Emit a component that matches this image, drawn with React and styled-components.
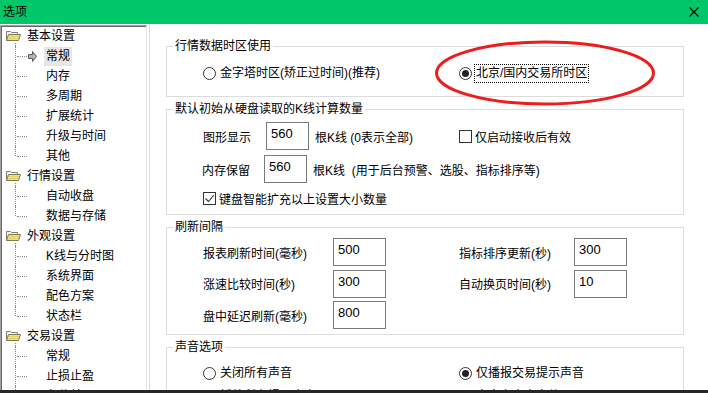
import React from "react";
import styled, { createGlobalStyle } from "styled-components";

const GlobalStyle = createGlobalStyle`
  html, body {
    margin: 0;
    padding: 0;
    background: #fff;
  }
  body {
    font-family: "Liberation Sans", "Noto Sans CJK SC", sans-serif;
    font-size: 12px;
    color: #000;
  }
`;

const tree = [
  {
    label: "基本设置",
    children: ["常规", "内存", "多周期", "扩展统计", "升级与时间", "其他"],
    selected: 0,
  },
  { label: "行情设置", children: ["自动收盘", "数据与存储"] },
  { label: "外观设置", children: ["K线与分时图", "系统界面", "配色方案", "状态栏"] },
  { label: "交易设置", children: ["常规", "止损止盈", "条件单"] },
];

const FolderIcon = () => (
  <svg width="15" height="12" viewBox="0 0 15 12">
    <path d="M0.5 10.5V1.5h4l1 1h6v2" fill="#f4f4f4" stroke="#7c7c7c" />
    <path
      d="M2.5 4.5h12l-2 6h-12z"
      fill="#efe27a"
      stroke="#7d7a55"
      strokeLinejoin="round"
    />
    <path d="M3.5 6.5h9M2.8 8.5h9" stroke="#d8c650" strokeDasharray="1 1" />
  </svg>
);

const ArrowIcon = () => (
  <svg width="9" height="11" viewBox="0 0 9 11">
    <path
      d="M0.5 3.5h4v-3l4 5-4 5v-3h-4z"
      fill="#b4b4b4"
      stroke="#5a5a5a"
      strokeLinejoin="round"
    />
  </svg>
);

const CloseIcon = () => (
  <svg width="10" height="10" viewBox="0 0 10 10">
    <path d="M0.5 0.5l9 9M9.5 0.5l-9 9" stroke="#000" strokeWidth="1.1" />
  </svg>
);

const Check = () => (
  <svg width="11" height="11" viewBox="0 0 11 11">
    <path d="M1.5 5.5l3 3 5.5-6.5" fill="none" stroke="#333" strokeWidth="1.1" />
  </svg>
);

const Option = ({ checked, focused, children }) => (
  <OptionRow>
    <Radio $checked={checked} />
    <OptionText $focused={focused}>{children}</OptionText>
  </OptionRow>
);

const App = () => {
  return (
    <Window>
      <GlobalStyle />
      <TitleBar>
        <span>选项</span>
        <CloseIcon />
      </TitleBar>
      <Body>
        <Tree>
          {tree.map((group) => (
            <div key={group.label}>
              <RootRow $open>
                <FolderIcon />
                <RootText>{group.label}</RootText>
              </RootRow>
              {group.children.map((child, i) => (
                <ChildRow key={child + i} $last={i === group.children.length - 1}>
                  <ArrowSlot>{group.selected === i && <ArrowIcon />}</ArrowSlot>
                  <ChildText $selected={group.selected === i}>{child}</ChildText>
                </ChildRow>
              ))}
            </div>
          ))}
        </Tree>
        <Panel>
          <Group>
            <Legend>行情数据时区使用</Legend>
            <TwoCols $pad="9px 0 13px 36px">
              <Option>金字塔时区(矫正过时间)(推荐)</Option>
              <Option checked focused>
                北京/国内交易所时区
              </Option>
            </TwoCols>
          </Group>

          <Group>
            <Legend>默认初始从硬盘读取的K线计算数量</Legend>
            <Stack>
              <TwoCols>
                <FieldRow>
                  <FieldLabel $w={63}>图形显示</FieldLabel>
                  <TextBox $w={43} readOnly defaultValue="560" />
                  <Suffix>根K线 (0表示全部)</Suffix>
                </FieldRow>
                <CheckRow>
                  <Box />
                  <span>仅启动接收后有效</span>
                </CheckRow>
              </TwoCols>
              <FieldRow>
                <FieldLabel $w={62} $shift={-1}>
                  内存保留
                </FieldLabel>
                <TextBox $w={43} readOnly defaultValue="560" />
                <Suffix>根K线&nbsp; (用于后台预警、选股、指标排序等)</Suffix>
              </FieldRow>
              <CheckRow>
                <Box>
                  <Check />
                </Box>
                <span>键盘智能扩充以上设置大小数量</span>
              </CheckRow>
            </Stack>
          </Group>

          <Group>
            <Legend>刷新间隔</Legend>
            <RefreshGrid>
              <span>报表刷新时间(毫秒)</span>
              <TextBox $w={53} readOnly defaultValue="500" />
              <span />
              <span>指标排序更新(秒)</span>
              <TextBox $w={53} readOnly defaultValue="300" />
              <span>涨速比较时间(秒)</span>
              <TextBox $w={53} readOnly defaultValue="300" />
              <span />
              <span>自动换页时间(秒)</span>
              <TextBox $w={53} readOnly defaultValue="10" />
              <span>盘中延迟刷新(毫秒)</span>
              <TextBox $w={53} readOnly defaultValue="800" />
            </RefreshGrid>
          </Group>

          <Group>
            <Legend>声音选项</Legend>
            <TwoCols $pad="8px 0 0 36px" $gap="3px">
              <Option>关闭所有声音</Option>
              <Option checked>仅播报交易提示声音</Option>
              <Option>播放所有提示声音</Option>
              <Option>自定义声音文件(wav)</Option>
            </TwoCols>
          </Group>

          <Ellipse width="222" height="66" viewBox="0 0 222 66">
            <ellipse
              cx="111"
              cy="33"
              rx="108.5"
              ry="31"
              fill="none"
              stroke="#ee1c1c"
              strokeWidth="3"
            />
          </Ellipse>
        </Panel>
      </Body>
      <Footer />
    </Window>
  );
};

export default App;

const Window = styled.div`
  width: 708px;
  height: 393px;
  display: flex;
  flex-direction: column;
  overflow: hidden;
  background: #fff;
`;

const TitleBar = styled.div`
  height: 24px;
  flex: none;
  box-sizing: border-box;
  padding: 0 9px 0 3px;
  display: flex;
  align-items: center;
  justify-content: space-between;
  background: #00c86a;
  line-height: 16px;
`;

const Body = styled.div`
  flex: 1;
  min-height: 0;
  display: flex;
  overflow: hidden;
`;

const Footer = styled.div`
  height: 3px;
  flex: none;
  background: #262626;
`;

const Tree = styled.div`
  width: 147px;
  flex: none;
  box-sizing: border-box;
  margin-top: 1px;
  border-top: 1px solid #a0a0a0;
  border-left: 1px solid #a0a0a0;
  border-right: 1px solid #e3e3e3;
  box-shadow: inset 1px 1px 0 #696969;
  overflow: hidden;
`;

const RootRow = styled.div`
  position: relative;
  height: 20px;
  display: flex;
  align-items: center;
  padding-left: 5px;

  &::after {
    content: "";
    display: ${(p) => (p.$open ? "block" : "none")};
    position: absolute;
    left: 14px;
    top: 17px;
    bottom: 0;
    border-left: 1px dotted #8a8a8a;
  }
`;

const RootText = styled.span`
  margin-left: 6px;
  line-height: 18px;
`;

const ChildRow = styled.div`
  position: relative;
  height: 20px;
  display: flex;
  align-items: center;
  padding-left: 26px;

  &::before {
    content: "";
    position: absolute;
    left: 14px;
    top: 0;
    height: ${(p) => (p.$last ? "10px" : "20px")};
    border-left: 1px dotted #8a8a8a;
  }

  &::after {
    content: "";
    position: absolute;
    left: 16px;
    top: 10px;
    width: 10px;
    border-top: 1px dotted #8a8a8a;
  }
`;

const ArrowSlot = styled.span`
  width: 17px;
  height: 11px;
  display: flex;
  padding-left: 1px;
  box-sizing: border-box;
`;

const ChildText = styled.span`
  padding: 0 2px;
  height: 19px;
  line-height: 19px;
  background: ${(p) => (p.$selected ? "#e6e6e6" : "transparent")};
`;

const Panel = styled.div`
  flex: 1;
  position: relative;
  margin-left: 2px;
  border-left: 1px solid #dcdcdc;
  padding: 14px 24px 0 16px;
  display: flex;
  flex-direction: column;
  gap: 4px;
`;

const Group = styled.fieldset`
  margin: 0;
  padding: 0;
  min-width: 0;
  border: 1px solid #dcdcdc;
`;

const Legend = styled.legend`
  margin-left: 6px;
  padding: 0 2px;
  line-height: 16px;
`;

const TwoCols = styled.div`
  display: grid;
  grid-template-columns: 256px auto;
  align-items: center;
  row-gap: ${(p) => p.$gap || "0"};
  padding: ${(p) => p.$pad || "0"};
`;

const Stack = styled.div`
  display: flex;
  flex-direction: column;
  gap: 5px;
  padding: 5px 0 6px 36px;
`;

const OptionRow = styled.div`
  height: 20px;
  display: flex;
  align-items: center;
`;

const Radio = styled.span`
  width: 13px;
  height: 13px;
  flex: none;
  box-sizing: border-box;
  border: 1px solid #333;
  border-radius: 50%;
  display: flex;
  align-items: center;
  justify-content: center;
  margin-right: 2px;

  &::after {
    content: "";
    display: ${(p) => (p.$checked ? "block" : "none")};
    width: 7px;
    height: 7px;
    border-radius: 50%;
    background: #222;
  }
`;

const OptionText = styled.span`
  line-height: 17px;
  padding: 0 1px;
  border: 1px dotted ${(p) => (p.$focused ? "#000" : "transparent")};
`;

const FieldRow = styled.div`
  height: 28px;
  display: flex;
  align-items: center;
`;

const FieldLabel = styled.span`
  width: ${(p) => p.$w}px;
  margin-left: ${(p) => p.$shift || 0}px;
  flex: none;
`;

const TextBox = styled.input`
  width: ${(p) => p.$w}px;
  height: 28px;
  box-sizing: border-box;
  margin: 0;
  padding: 1px 4px 6px;
  border: 1px solid #7a7a7a;
  border-radius: 0;
  outline: none;
  background: #fff;
  font-family: "Liberation Sans", sans-serif;
  font-size: 13px;
  color: #000;
`;

const Suffix = styled.span`
  margin-left: 6px;
  white-space: nowrap;
`;

const CheckRow = styled.div`
  height: 20px;
  display: flex;
  align-items: center;
  gap: 3px;
`;

const Box = styled.span`
  width: 13px;
  height: 13px;
  box-sizing: border-box;
  border: 1px solid #333;
  display: flex;
  align-items: center;
  justify-content: center;
`;

const RefreshGrid = styled.div`
  display: grid;
  grid-template-columns: 130px 53px 73px 115px 53px;
  grid-auto-rows: 28px;
  row-gap: 3.5px;
  align-items: center;
  padding: 3px 0 5px 36px;
`;

const Ellipse = styled.svg`
  position: absolute;
  left: 284px;
  top: 16px;
  pointer-events: none;
`;
